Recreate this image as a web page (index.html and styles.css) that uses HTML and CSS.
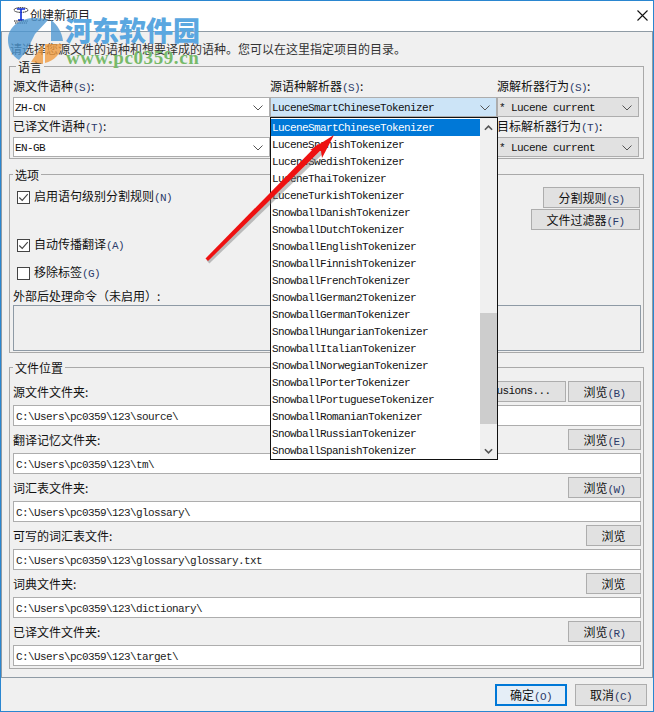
FILE: index.html
```html
<!DOCTYPE html>
<html lang="zh-CN">
<head>
<meta charset="utf-8">
<title>创建新项目</title>
<link rel="stylesheet" href="styles.css">
</head>
<body>
<div class="window">
  <header class="titlebar">
    <svg class="app-icon" viewBox="0 0 18 18" width="18" height="18"><ellipse cx="9" cy="4" rx="7" ry="2.4" fill="none" stroke="#111" stroke-width="1" stroke-dasharray="1.5 .7"/><path d="M5 3h8M9 3v11M6 14h6" fill="none" stroke="#0a2ad8" stroke-width="1.6"/><path d="M2 15h14M3 17h12" stroke="#111" stroke-width="1" stroke-dasharray="1.5 .7"/></svg>
    <span class="title-text">创建新项目</span>
    <svg class="close" viewBox="0 0 11 11" width="11" height="11"><path d="M.5.5l10 10M10.5.5l-10 10" stroke="#111" stroke-width="1.1" fill="none"/></svg>
  </header>
  <main class="panel">
    <p class="intro">请选择您源文件的语种和想要译成的语种。您可以在这里指定项目的目录。</p>
    <fieldset class="group lang">
      <legend>语言</legend>
      <div class="lang-grid">
        <div class="cell"><label>源文件语种<b>(S)</b>:</label><div class="combo white"><span>ZH-CN</span><svg class="chev" viewBox="0 0 10 6" width="10" height="6"><path d="M.5.5l4.5 4.5 4.5-4.5" fill="none" stroke="#555"/></svg></div></div>
        <div class="cell"><label>源语种解析器<b>(S)</b>:</label><div class="combo focus"><span>LuceneSmartChineseTokenizer</span><svg class="chev" viewBox="0 0 10 6" width="10" height="6"><path d="M.5.5l4.5 4.5 4.5-4.5" fill="none" stroke="#555"/></svg></div></div>
        <div class="cell"><label>源解析器行为<b>(S)</b>:</label><div class="combo gray"><span>* Lucene current</span><svg class="chev" viewBox="0 0 10 6" width="10" height="6"><path d="M.5.5l4.5 4.5 4.5-4.5" fill="none" stroke="#555"/></svg></div></div>
        <div class="cell"><label>已译文件语种<b>(T)</b>:</label><div class="combo white"><span>EN-GB</span><svg class="chev" viewBox="0 0 10 6" width="10" height="6"><path d="M.5.5l4.5 4.5 4.5-4.5" fill="none" stroke="#555"/></svg></div></div>
        <div class="cell"></div>
        <div class="cell"><label>目标解析器行为<b>(T)</b>:</label><div class="combo gray"><span>* Lucene current</span><svg class="chev" viewBox="0 0 10 6" width="10" height="6"><path d="M.5.5l4.5 4.5 4.5-4.5" fill="none" stroke="#555"/></svg></div></div>
      </div>
    </fieldset>
    <fieldset class="group options">
      <legend>选项</legend>
      <div class="opt-top">
        <div class="check first"><span class="box checked"><svg viewBox="0 0 13 13" width="11" height="11"><path d="M1.5 6.5l3.5 3.5 6.5-7.5" fill="none" stroke="#444" stroke-width="1.3"/></svg></span><span>启用语句级别分割规则<b>(N)</b></span></div>
        <div class="opt-buttons">
          <button class="btn seg">分割规则<b>(S)</b></button>
          <button class="btn filt">文件过滤器<b>(F)</b></button>
        </div>
      </div>
      <div class="check second"><span class="box checked"><svg viewBox="0 0 13 13" width="11" height="11"><path d="M1.5 6.5l3.5 3.5 6.5-7.5" fill="none" stroke="#444" stroke-width="1.3"/></svg></span><span>自动传播翻译<b>(A)</b></span></div>
      <div class="check third"><span class="box"></span><span>移除标签<b>(G)</b></span></div>
      <label class="ext-label">外部后处理命令（未启用）:</label>
      <div class="ext-box"></div>
    </fieldset>
    <fieldset class="group files">
      <legend>文件位置</legend>
      <div class="row"><div class="row-head"><label>源文件文件夹:</label><div class="row-btns"><button class="btn excl">Exclusions...</button><button class="btn browse">浏览<b>(B)</b></button></div></div><div class="path">C:\Users\pc0359\123\source\</div></div>
      <div class="row"><div class="row-head"><label>翻译记忆文件夹:</label><div class="row-btns"><button class="btn browse">浏览<b>(E)</b></button></div></div><div class="path">C:\Users\pc0359\123\tm\</div></div>
      <div class="row"><div class="row-head"><label>词汇表文件夹:</label><div class="row-btns"><button class="btn browse">浏览<b>(W)</b></button></div></div><div class="path">C:\Users\pc0359\123\glossary\</div></div>
      <div class="row"><div class="row-head"><label>可写的词汇表文件:</label><div class="row-btns"><button class="btn small">浏览</button></div></div><div class="path">C:\Users\pc0359\123\glossary\glossary.txt</div></div>
      <div class="row"><div class="row-head"><label>词典文件夹:</label><div class="row-btns"><button class="btn small">浏览</button></div></div><div class="path">C:\Users\pc0359\123\dictionary\</div></div>
      <div class="row"><div class="row-head"><label>已译文件文件夹:</label><div class="row-btns"><button class="btn browse">浏览<b>(R)</b></button></div></div><div class="path">C:\Users\pc0359\123\target\</div></div>
    </fieldset>
  </main>
  <footer class="footer">
    <button class="btn action primary">确定<b>(O)</b></button>
    <button class="btn action">取消<b>(C)</b></button>
  </footer>

  <div class="dropdown">
    <ul class="list">
      <li class="selected">LuceneSmartChineseTokenizer</li>
      <li>LuceneSpanishTokenizer</li>
      <li>LuceneSwedishTokenizer</li>
      <li>LuceneThaiTokenizer</li>
      <li>LuceneTurkishTokenizer</li>
      <li>SnowballDanishTokenizer</li>
      <li>SnowballDutchTokenizer</li>
      <li>SnowballEnglishTokenizer</li>
      <li>SnowballFinnishTokenizer</li>
      <li>SnowballFrenchTokenizer</li>
      <li>SnowballGerman2Tokenizer</li>
      <li>SnowballGermanTokenizer</li>
      <li>SnowballHungarianTokenizer</li>
      <li>SnowballItalianTokenizer</li>
      <li>SnowballNorwegianTokenizer</li>
      <li>SnowballPorterTokenizer</li>
      <li>SnowballPortugueseTokenizer</li>
      <li>SnowballRomanianTokenizer</li>
      <li>SnowballRussianTokenizer</li>
      <li>SnowballSpanishTokenizer</li>
    </ul>
    <div class="scrollbar">
      <svg class="sb-up" viewBox="0 0 10 6" width="9" height="6"><path d="M1 5l4-4 4 4" fill="none" stroke="#555" stroke-width="1.8"/></svg>
      <div class="thumb"></div>
      <svg class="sb-down" viewBox="0 0 10 6" width="9" height="6"><path d="M1 1l4 4 4-4" fill="none" stroke="#555" stroke-width="1.8"/></svg>
    </div>
  </div>

  <svg class="arrow" viewBox="0 0 654 712" width="654" height="712">
    <path d="M208 262L324 150" stroke="#777" stroke-opacity=".45" stroke-width="4" fill="none"/>
    <path d="M205.500 258.500L208 261L322 149L318 144Z" fill="#ee1111"/>
    <path d="M334 135L310 150L321 151L322 158Z" fill="#ee1111"/>
  </svg>

  <div class="watermark">
    <svg class="wm-logo" viewBox="0 0 58 48" width="58" height="48"><path d="M3 24C3 10 16 2 30 2L44 3L30 18L22 34L14 44C7 40 3 32 3 24Z" fill="#4b96d2"/><path d="M26 46L38 28V48Z" fill="#f09a3c"/><path d="M40 47V28H57C56 38 49 45 40 47Z" fill="#f09a3c"/><path d="M46 4C53 9 57 17 58 25L46 25Z" fill="#4b96d2"/></svg>
    <span class="wm-cn">河东软件园</span>
    <span class="wm-url">www.pc0359.cn</span>
  </div>
</div>
</body>
</html>
```
FILE: styles.css
```css
* { box-sizing: border-box; }
html, body { margin: 0; padding: 0; }
body {
  width: 654px;
  height: 712px;
  overflow: hidden;
  font-family: "Noto Sans CJK SC", "Liberation Mono", monospace;
  font-size: 12px;
  color: #111;
  background: #f0f0f0;
}
b {
  font-family: "Liberation Mono", monospace;
  font-weight: 400;
  font-size: 11px;
  letter-spacing: -0.6px;
  color: #2b3a6a;
}
.window {
  position: relative;
  width: 654px;
  height: 712px;
  border: 1px solid #2a86d0;
  background: #f0f0f0;
  display: flex;
  flex-direction: column;
}
.titlebar {
  height: 30px;
  flex: none;
  background: #fff;
  display: flex;
  align-items: center;
  padding: 0 0 2px 11px;
  font-size: 12px;
}
.title-text { color: #222; line-height: 18px; }
.close { margin-left: auto; margin-right: 5px; }
.panel {
  height: 647px;
  flex: none;
  background: #f0f0f0;
  border: 1px solid #8f9ba5;
  padding: 0 7px 0 7px;
  display: flex;
  flex-direction: column;
}
.intro { margin: 9px 0 0 1px; height: 15px; line-height: 15px; color: #333; }
fieldset.group {
  margin: 0;
  padding: 0;
  border: 1px solid #a9a9a9;
  min-width: 0;
  width: 635px;
  flex: none;
}
legend {
  margin-left: 3px;
  padding: 0 2px;
  line-height: 14px;
  height: 12px;
  font-size: 12px;
}
.lang { margin-top: 4px !important; height: 99px; padding: 5px 3px 0 3px !important; }
.lang-grid {
  display: grid;
  grid-template-columns: 257px 227px 142px;
  grid-template-rows: 40px 40px;
}
.cell { display: flex; flex-direction: column; justify-content: flex-end; }
.cell label { height: 20px; line-height: 17px; }
.combo {
  height: 20px;
  border: 1px solid #adadad;
  display: flex;
  align-items: center;
  justify-content: space-between;
  padding: 1px 6px 0 1px;
  font-family: "Liberation Mono", monospace;
  font-size: 11px;
  letter-spacing: -0.6px;
}
.combo.white { background: #fff; }
.combo.focus { background: #cce4f7; }
.combo.gray { background: #e1e1e1; }
.options { margin-top: 9px !important; height: 185px; }
.opt-top {
  display: flex;
  justify-content: space-between;
  align-items: flex-start;
  height: 58px;
  padding: 7px 3px 0 0;
}
.check { display: flex; align-items: center; gap: 4px; height: 14px; line-height: 14px; padding-left: 7px; }
.first { margin-top: 3px; }
.box { width: 13px; height: 13px; border: 1px solid #444; background: #fff; display: flex; align-items: center; justify-content: center; }
.third { margin-top: 14px; }
.opt-buttons { display: flex; flex-direction: column; align-items: flex-end; gap: 1px; }
.btn {
  height: 21px;
  border: 1px solid #adadad;
  background: #e1e1e1;
  font-family: "Noto Sans CJK SC", monospace;
  font-size: 12px;
  color: #111;
  padding: 0;
  line-height: 19px;
  display: block;
}
.seg { width: 97px; }
.filt { width: 109px; }
.ext-label { display: block; margin: 8px 0 0 3px; height: 15px; line-height: 15px; }
.ext-box { height: 46px; margin: 2px 2px 0 3px; border: 1px solid #8e9aa5; background: #efefef; }
.files { margin-top: 8px !important; height: 308px; padding: 8px 0 0 0 !important; }
.row { height: 48px; padding: 0 2px 0 3px; }
.row-head { height: 24px; display: flex; justify-content: space-between; align-items: flex-start; }
.row-head label { line-height: 21px; }
.row-btns { display: flex; gap: 2px; }
.excl { width: 109px; font-family: "Liberation Mono", monospace; font-size: 11px; letter-spacing: -0.6px; }
.browse { width: 73px; }
.small { width: 55px; }
.path {
  height: 21px;
  border: 1px solid #adadad;
  background: #fff;
  padding-left: 2px;
  line-height: 22px;
  font-family: "Liberation Mono", monospace;
  font-size: 11px;
  letter-spacing: -0.6px;
  white-space: nowrap;
  color: #222;
}
.footer {
  flex: 1;
  display: flex;
  justify-content: flex-end;
  align-items: flex-start;
  gap: 8px;
  padding: 6px 6px 0 0;
}
.action { width: 72px; height: 22px; }
.primary { border: 2px solid #0078d7; background: #e5eef7; line-height: 18px; }
.dropdown {
  position: absolute;
  left: 269px;
  top: 116px;
  width: 228px;
  height: 343px;
  border: 1px solid #111;
  background: #fff;
  display: flex;
  z-index: 2;
}
.list {
  list-style: none;
  margin: 0;
  padding: 1px 0 0;
  flex: 1;
  font-family: "Liberation Mono", monospace;
  font-size: 11px;
  letter-spacing: -0.6px;
}
.list li { height: 17px; line-height: 19px; padding-left: 1px; white-space: nowrap; }
.list .selected { background: #0078d7; color: #fff; }
.scrollbar { position: relative; width: 17px; background: #f0f0f0; }
.sb-up, .sb-down { position: absolute; left: 4px; }
.sb-up { top: 7px; }
.sb-down { bottom: 5px; }
.thumb { position: absolute; left: 0; top: 195px; width: 17px; height: 111px; background: #cdcdcd; }
.arrow { position: absolute; left: -1px; top: -1px; pointer-events: none; z-index: 3; }
.watermark { position: absolute; left: 0; top: 0; width: 240px; height: 70px; z-index: 4; pointer-events: none; }
.wm-logo { position: absolute; left: 4px; top: 15px; opacity: 0.78; }
.wm-cn {
  position: absolute;
  left: 64px;
  top: 13px;
  font-family: "Noto Sans CJK SC", sans-serif;
  font-weight: 900;
  font-size: 27px;
  line-height: 32px;
  color: #5aa7e0;
  white-space: nowrap;
}
.wm-url {
  position: absolute;
  left: 65px;
  top: 47px;
  font-family: "Liberation Serif", serif;
  font-weight: 700;
  font-size: 19px;
  line-height: 20px;
  letter-spacing: 0.6px;
  color: #77ba6a;
  white-space: nowrap;
}
```
